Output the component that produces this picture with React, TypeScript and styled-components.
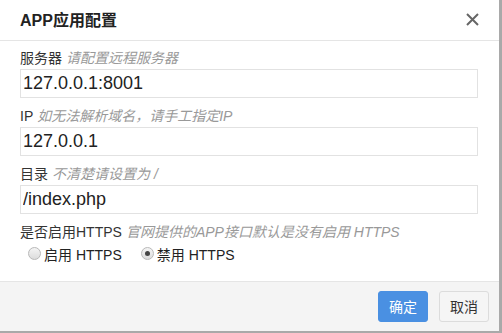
import React, { useState } from "react";
import styled, { createGlobalStyle } from "styled-components";

const GlobalStyle = createGlobalStyle`
  html, body {
    margin: 0;
    padding: 0;
    background: #a9a9a9;
  }
  body {
    font-family: "Liberation Sans", "Noto Sans CJK SC", Arial, sans-serif;
    color: #333;
  }
`;

const Dialog = styled.div`
  width: 499px;
  height: 331px;
  background: #fff;
  display: flex;
  flex-direction: column;
  box-sizing: border-box;
`;

const Header = styled.div`
  height: 41px;
  box-sizing: border-box;
  border-bottom: 1px solid #e5e5e5;
  display: flex;
  align-items: center;
  justify-content: space-between;
  padding: 0 20px 2px 20px;
`;

const Title = styled.h3`
  margin: 0;
  font-size: 16px;
  font-weight: bold;
  color: #222;
`;

const CloseButton = styled.button`
  border: 0;
  background: none;
  padding: 0;
  width: 14px;
  height: 14px;
  display: flex;
  align-items: center;
  justify-content: center;
  cursor: pointer;
  margin-right: 0;
`;

const Body = styled.div`
  flex: 1;
  padding: 7px 21px 0 20px;
`;

const Field = styled.div`
  & + & {
    margin-top: 8px;
  }
`;

const Label = styled.div`
  font-size: 14px;
  line-height: 21px;
  color: #333;
`;

const Hint = styled.span`
  font-style: italic;
  color: #999;
  margin-left: 4px;
`;

const TextInput = styled.input`
  display: block;
  width: 100%;
  height: 29px;
  box-sizing: border-box;
  border: 1px solid #e2e2e2;
  padding: 0 2px;
  font-family: "Liberation Sans", "Noto Sans CJK SC", Arial, sans-serif;
  font-size: 18px;
  color: #222;
  outline: none;
`;

const RadioRow = styled.div`
  display: flex;
  gap: 19px;
  padding-left: 8px;
  height: 21px;
  align-items: center;
`;

const RadioOption = styled.label`
  display: flex;
  align-items: center;
  gap: 3px;
  font-size: 14px;
  color: #222;
  cursor: pointer;
`;

const RadioDot = styled.span<{ $checked: boolean }>`
  width: 11px;
  height: 11px;
  border-radius: 50%;
  border: 1px solid #b8b8b8;
  background: linear-gradient(#f4f4f4, #dcdcdc);
  display: flex;
  align-items: center;
  justify-content: center;
  &::after {
    content: "";
    width: 5px;
    height: 5px;
    border-radius: 50%;
    background: ${(p) => (p.$checked ? "#444" : "transparent")};
  }
`;

const Footer = styled.div`
  height: 50px;
  box-sizing: border-box;
  border-top: 1px solid #e5e5e5;
  background: #f4f4f4;
  display: flex;
  align-items: center;
  justify-content: flex-end;
  gap: 11px;
  padding: 0 10px 1px 0;
`;

const Button = styled.button<{ $primary?: boolean }>`
  height: 31px;
  padding: 0 10px;
  border-radius: 3px;
  font-family: "Liberation Sans", "Noto Sans CJK SC", Arial, sans-serif;
  font-size: 14px;
  cursor: pointer;
  border: 1px solid ${(p) => (p.$primary ? "#4a90e2" : "#dcdcdc")};
  background: ${(p) => (p.$primary ? "#4a90e2" : "#f5f5f5")};
  color: ${(p) => (p.$primary ? "#fff" : "#333")};
`;

export default function App() {
  const [server, setServer] = useState("127.0.0.1:8001");
  const [ip, setIp] = useState("127.0.0.1");
  const [dir, setDir] = useState("/index.php");
  const [https, setHttps] = useState(false);

  return (
    <>
      <GlobalStyle />
      <Dialog>
        <Header>
          <Title>APP应用配置</Title>
          <CloseButton aria-label="close">
            <svg width="13" height="13" viewBox="0 0 13 13">
              <path d="M1 1 L12 12 M12 1 L1 12" stroke="#666" strokeWidth="2" />
            </svg>
          </CloseButton>
        </Header>
        <Body>
          <Field>
            <Label>
              服务器<Hint>请配置远程服务器</Hint>
            </Label>
            <TextInput value={server} onChange={(e) => setServer(e.target.value)} />
          </Field>
          <Field>
            <Label>
              IP<Hint>如无法解析域名，请手工指定IP</Hint>
            </Label>
            <TextInput value={ip} onChange={(e) => setIp(e.target.value)} />
          </Field>
          <Field>
            <Label>
              目录<Hint>不清楚请设置为 /</Hint>
            </Label>
            <TextInput value={dir} onChange={(e) => setDir(e.target.value)} />
          </Field>
          <Field>
            <Label>
              是否启用HTTPS<Hint>官网提供的APP接口默认是没有启用 HTTPS</Hint>
            </Label>
            <RadioRow>
              <RadioOption onClick={() => setHttps(true)}>
                <RadioDot $checked={https} />
                启用 HTTPS
              </RadioOption>
              <RadioOption onClick={() => setHttps(false)}>
                <RadioDot $checked={!https} />
                禁用 HTTPS
              </RadioOption>
            </RadioRow>
          </Field>
        </Body>
        <Footer>
          <Button $primary>确定</Button>
          <Button>取消</Button>
        </Footer>
      </Dialog>
    </>
  );
}
